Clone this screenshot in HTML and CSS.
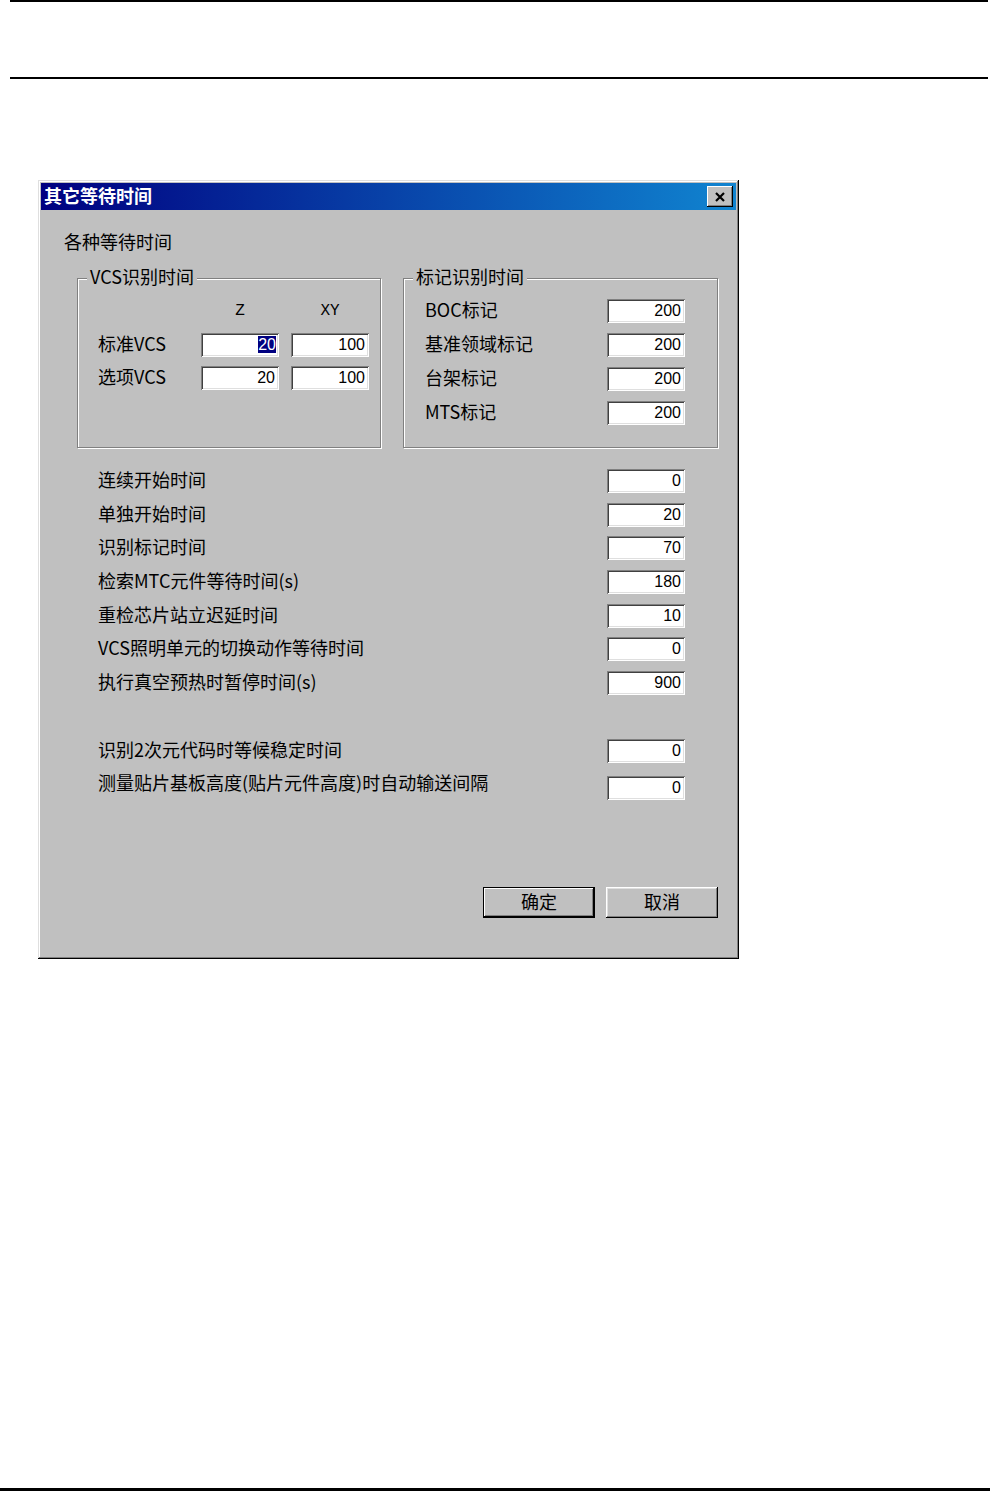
FILE: index.html
```html
<!DOCTYPE html>
<html lang="zh-CN">
<head>
  <meta charset="UTF-8" />
  <title>其它等待时间</title>
  <link rel="stylesheet" href="styles.css">
</head>
<body>
  <div class="page">
    <div class="page-head"></div>

    <div class="dialog">
      <div class="titlebar">
        <span class="title">其它等待时间</span>
        <span class="close">
          <svg width="12" height="10" viewBox="0 0 12 10"><path d="M2 1 L10 9 M10 1 L2 9" stroke="#000" stroke-width="2.2" fill="none"/></svg>
        </span>
      </div>

      <div class="client">
        <div class="heading">各种等待时间</div>

        <div class="groups">
          <div class="group group-vcs">
            <span class="legend">VCS识别时间</span>
            <div class="vcs-grid">
              <span></span>
              <span class="col-head">Z</span>
              <span class="col-head">XY</span>
              <span class="label">标准VCS</span>
              <span class="field field-sel"><span class="sel">20</span></span>
              <span class="field">100</span>
              <span class="label">选项VCS</span>
              <span class="field">20</span>
              <span class="field">100</span>
            </div>
          </div>

          <div class="group group-mark">
            <span class="legend">标记识别时间</span>
            <div class="mark-grid">
              <span class="label">BOC标记</span><span class="field">200</span>
              <span class="label">基准领域标记</span><span class="field">200</span>
              <span class="label">台架标记</span><span class="field">200</span>
              <span class="label">MTS标记</span><span class="field">200</span>
            </div>
          </div>
        </div>

        <div class="rows">
          <span class="label">连续开始时间</span><span class="field">0</span>
          <span class="label">单独开始时间</span><span class="field">20</span>
          <span class="label">识别标记时间</span><span class="field">70</span>
          <span class="label">检索MTC元件等待时间(s)</span><span class="field">180</span>
          <span class="label">重检芯片站立迟延时间</span><span class="field">10</span>
          <span class="label">VCS照明单元的切换动作等待时间</span><span class="field">0</span>
          <span class="label">执行真空预热时暂停时间(s)</span><span class="field">900</span>
        </div>

        <div class="rows rows-extra">
          <span class="label">识别2次元代码时等候稳定时间</span><span class="field">0</span>
          <span class="label raised">测量贴片基板高度(贴片元件高度)时自动输送间隔</span><span class="field">0</span>
        </div>

        <div class="buttons">
          <button class="btn btn-default">确定</button>
          <button class="btn">取消</button>
        </div>
      </div>
    </div>

    <div class="page-foot"></div>
  </div>
</body>
</html>
```

FILE: styles.css
```css
body {
  margin: 0;
  background: #fff;
  font-family: "Noto Sans CJK SC", sans-serif;
  font-size: 18px;
  line-height: 20px;
  color: #000;
}
.page {
  height: 1491px;
  display: flex;
  flex-direction: column;
}
.page-head {
  margin: 0 2px 0 10px;
  height: 75px;
  border-top: 2px solid #000;
  border-bottom: 2px solid #000;
}
.page-foot {
  margin-top: auto;
  height: 3px;
  background: #000;
}

/* dialog window */
.dialog {
  margin: 101px 0 0 38px;
  width: 701px;
  height: 779px;
  box-sizing: border-box;
  padding: 3px;
  background: #c0c0c0;
  box-shadow: inset -1px -1px #000, inset 1px 1px #dfdfdf, inset -2px -2px #808080, inset 2px 2px #fff;
}
.titlebar {
  height: 27px;
  display: flex;
  align-items: center;
  justify-content: space-between;
  background: linear-gradient(to right, #000080, #1084d0);
}
.title {
  padding: 0 0 3px 3px;
  color: #fff;
  font-weight: bold;
  font-size: 18px;
}
.close {
  width: 26px;
  height: 21px;
  margin-right: 3px;
  display: flex;
  align-items: center;
  justify-content: center;
  background: #c0c0c0;
  box-shadow: inset -1px -1px #000, inset 1px 1px #fff, inset -2px -2px #808080;
}
.client {
  padding: 21px 18px 0 23px;
}
.heading {
  height: 20px;
}
.label {
  margin-bottom: 4px;
}

/* group boxes */
.groups {
  display: flex;
  gap: 22px;
  margin: 27px 0 0 13px;
}
.group {
  position: relative;
  height: 170px;
  box-sizing: border-box;
  border: 1px solid #808080;
  box-shadow: inset 1px 1px #fff, 1px 1px #fff;
}
.group-vcs {
  width: 304px;
}
.group-mark {
  width: 315px;
}
.legend {
  position: absolute;
  top: -13px;
  left: 9px;
  padding: 0 3px;
  background: #c0c0c0;
}
.vcs-grid {
  display: grid;
  grid-template-columns: 91px 78px 78px;
  grid-template-rows: 23px 24px 24px;
  column-gap: 12px;
  row-gap: 9px;
  align-items: center;
  padding: 22px 0 0 20px;
}
.col-head {
  align-self: start;
  text-align: center;
  font-family: "Liberation Mono", monospace;
  font-size: 16px;
}
.mark-grid {
  display: grid;
  grid-template-columns: 182px 78px;
  grid-auto-rows: 24px;
  row-gap: 10px;
  align-items: center;
  padding: 20px 0 0 21px;
}

/* edit fields */
.field {
  display: block;
  height: 24px;
  box-sizing: border-box;
  padding: 2px 4px 0 0;
  background: #fff;
  text-align: right;
  font-family: "Liberation Sans", sans-serif;
  font-size: 16px;
  line-height: 20px;
  box-shadow: inset 1px 1px #808080, inset -1px -1px #fff, inset 2px 2px #404040, inset -2px -2px #dfdfdf;
}
.field-sel {
  padding-right: 3px;
}
.sel {
  background: #000080;
  color: #fff;
}

/* single rows */
.rows {
  display: grid;
  grid-template-columns: 509px 78px;
  grid-auto-rows: 24px;
  row-gap: 9.67px;
  align-items: center;
  margin-top: 21px;
  padding-left: 34px;
}
.rows-extra {
  margin-top: 44px;
  row-gap: 13px;
}
.label.raised {
  margin-bottom: 12px;
}

/* buttons */
.buttons {
  display: flex;
  justify-content: flex-end;
  gap: 11px;
  margin-top: 87px;
}
.btn {
  width: 112px;
  height: 31px;
  padding: 0 0 3px;
  border: none;
  background: #c0c0c0;
  font-family: "Noto Sans CJK SC", sans-serif;
  font-size: 18px;
  color: #000;
  box-shadow: inset -1px -1px #000, inset 1px 1px #fff, inset -2px -2px #808080, inset 2px 2px #dfdfdf;
}
.btn-default {
  box-shadow: inset 0 0 0 1px #000, inset -2px -2px #000, inset 2px 2px #fff, inset -3px -3px #808080;
}
```
